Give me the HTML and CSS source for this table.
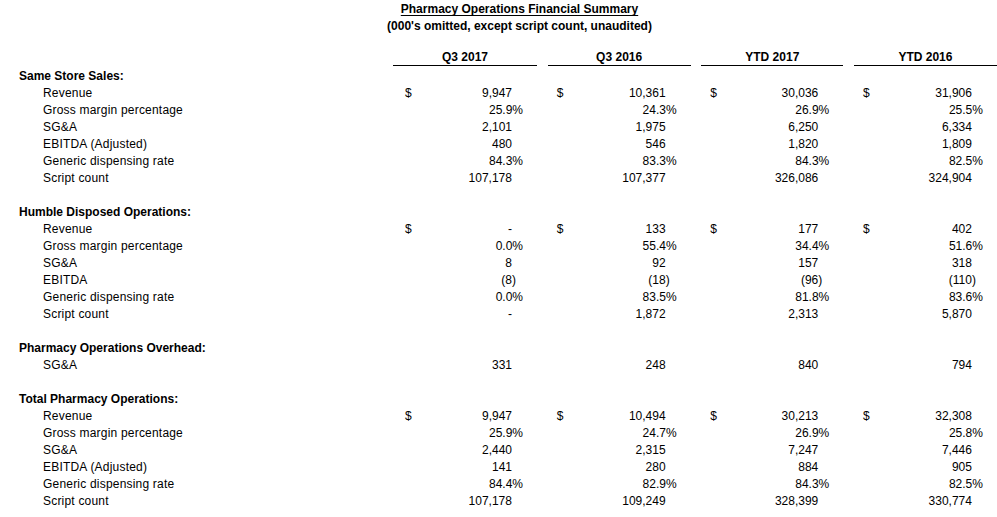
FILE: index.html
```html
<!DOCTYPE html>
<html>
<head>
<meta charset="utf-8">
<title>Pharmacy Operations Financial Summary</title>
<link rel="stylesheet" href="styles.css">
</head>
<body>
<div class="sheet">
  <div class="title"><span class="u">Pharmacy Operations Financial Summary</span></div>
  <div class="subtitle">(000's omitted, except script count, unaudited)</div>

  <div class="row head">
    <div class="label"></div>
    <div class="hd">Q3 2017</div>
    <div class="hd">Q3 2016</div>
    <div class="hd">YTD 2017</div>
    <div class="hd">YTD 2016</div>
  </div>

  <section class="block">
    <div class="row"><div class="label sec">Same Store Sales:</div></div>
    <div class="row">
      <div class="label sub">Revenue</div>
      <div class="c first"><span>$</span><span>9,947</span></div>
      <div class="c"><span>$</span><span>10,361</span></div>
      <div class="c"><span>$</span><span>30,036</span></div>
      <div class="c"><span>$</span><span>31,906</span></div>
    </div>
    <div class="row">
      <div class="label sub">Gross margin percentage</div>
      <div class="c pct"><span></span><span>25.9%</span></div>
      <div class="c pct"><span></span><span>24.3%</span></div>
      <div class="c pct"><span></span><span>26.9%</span></div>
      <div class="c pct"><span></span><span>25.5%</span></div>
    </div>
    <div class="row">
      <div class="label sub">SG&amp;A</div>
      <div class="c"><span></span><span>2,101</span></div>
      <div class="c"><span></span><span>1,975</span></div>
      <div class="c"><span></span><span>6,250</span></div>
      <div class="c"><span></span><span>6,334</span></div>
    </div>
    <div class="row">
      <div class="label sub">EBITDA (Adjusted)</div>
      <div class="c"><span></span><span>480</span></div>
      <div class="c"><span></span><span>546</span></div>
      <div class="c"><span></span><span>1,820</span></div>
      <div class="c"><span></span><span>1,809</span></div>
    </div>
    <div class="row">
      <div class="label sub">Generic dispensing rate</div>
      <div class="c pct"><span></span><span>84.3%</span></div>
      <div class="c pct"><span></span><span>83.3%</span></div>
      <div class="c pct"><span></span><span>84.3%</span></div>
      <div class="c pct"><span></span><span>82.5%</span></div>
    </div>
    <div class="row">
      <div class="label sub">Script count</div>
      <div class="c"><span></span><span>107,178</span></div>
      <div class="c"><span></span><span>107,377</span></div>
      <div class="c"><span></span><span>326,086</span></div>
      <div class="c"><span></span><span>324,904</span></div>
    </div>
  </section>

  <section class="block">
    <div class="row"><div class="label sec">Humble Disposed Operations:</div></div>
    <div class="row">
      <div class="label sub">Revenue</div>
      <div class="c first"><span>$</span><span>-</span></div>
      <div class="c"><span>$</span><span>133</span></div>
      <div class="c"><span>$</span><span>177</span></div>
      <div class="c"><span>$</span><span>402</span></div>
    </div>
    <div class="row">
      <div class="label sub">Gross margin percentage</div>
      <div class="c pct"><span></span><span>0.0%</span></div>
      <div class="c pct"><span></span><span>55.4%</span></div>
      <div class="c pct"><span></span><span>34.4%</span></div>
      <div class="c pct"><span></span><span>51.6%</span></div>
    </div>
    <div class="row">
      <div class="label sub">SG&amp;A</div>
      <div class="c"><span></span><span>8</span></div>
      <div class="c"><span></span><span>92</span></div>
      <div class="c"><span></span><span>157</span></div>
      <div class="c"><span></span><span>318</span></div>
    </div>
    <div class="row">
      <div class="label sub">EBITDA</div>
      <div class="c neg"><span></span><span>(8)</span></div>
      <div class="c neg"><span></span><span>(18)</span></div>
      <div class="c neg"><span></span><span>(96)</span></div>
      <div class="c neg"><span></span><span>(110)</span></div>
    </div>
    <div class="row">
      <div class="label sub">Generic dispensing rate</div>
      <div class="c pct"><span></span><span>0.0%</span></div>
      <div class="c pct"><span></span><span>83.5%</span></div>
      <div class="c pct"><span></span><span>81.8%</span></div>
      <div class="c pct"><span></span><span>83.6%</span></div>
    </div>
    <div class="row">
      <div class="label sub">Script count</div>
      <div class="c"><span></span><span>-</span></div>
      <div class="c"><span></span><span>1,872</span></div>
      <div class="c"><span></span><span>2,313</span></div>
      <div class="c"><span></span><span>5,870</span></div>
    </div>
  </section>

  <section class="block">
    <div class="row"><div class="label sec">Pharmacy Operations Overhead:</div></div>
    <div class="row">
      <div class="label sub">SG&amp;A</div>
      <div class="c"><span></span><span>331</span></div>
      <div class="c"><span></span><span>248</span></div>
      <div class="c"><span></span><span>840</span></div>
      <div class="c"><span></span><span>794</span></div>
    </div>
  </section>

  <section class="block">
    <div class="row"><div class="label sec">Total Pharmacy Operations:</div></div>
    <div class="row">
      <div class="label sub">Revenue</div>
      <div class="c first"><span>$</span><span>9,947</span></div>
      <div class="c"><span>$</span><span>10,494</span></div>
      <div class="c"><span>$</span><span>30,213</span></div>
      <div class="c"><span>$</span><span>32,308</span></div>
    </div>
    <div class="row">
      <div class="label sub">Gross margin percentage</div>
      <div class="c pct"><span></span><span>25.9%</span></div>
      <div class="c pct"><span></span><span>24.7%</span></div>
      <div class="c pct"><span></span><span>26.9%</span></div>
      <div class="c pct"><span></span><span>25.8%</span></div>
    </div>
    <div class="row">
      <div class="label sub">SG&amp;A</div>
      <div class="c"><span></span><span>2,440</span></div>
      <div class="c"><span></span><span>2,315</span></div>
      <div class="c"><span></span><span>7,247</span></div>
      <div class="c"><span></span><span>7,446</span></div>
    </div>
    <div class="row">
      <div class="label sub">EBITDA (Adjusted)</div>
      <div class="c"><span></span><span>141</span></div>
      <div class="c"><span></span><span>280</span></div>
      <div class="c"><span></span><span>884</span></div>
      <div class="c"><span></span><span>905</span></div>
    </div>
    <div class="row">
      <div class="label sub">Generic dispensing rate</div>
      <div class="c pct"><span></span><span>84.4%</span></div>
      <div class="c pct"><span></span><span>82.9%</span></div>
      <div class="c pct"><span></span><span>84.3%</span></div>
      <div class="c pct"><span></span><span>82.5%</span></div>
    </div>
    <div class="row">
      <div class="label sub">Script count</div>
      <div class="c"><span></span><span>107,178</span></div>
      <div class="c"><span></span><span>109,249</span></div>
      <div class="c"><span></span><span>328,399</span></div>
      <div class="c"><span></span><span>330,774</span></div>
    </div>
  </section>
</div>
</body>
</html>
```

FILE: styles.css
```css
html, body {
  margin: 0;
  padding: 0;
  background: #ffffff;
}

body {
  font-family: "Liberation Sans", Arial, sans-serif;
  font-size: 12px;
  line-height: 17px;
  color: #000000;
  width: 997px;
  overflow: hidden;
}

.sheet {
  padding-top: 1px;
}

.title,
.subtitle {
  font-weight: bold;
  text-align: center;
  padding-left: 42px;
  height: 17px;
}

.title .u {
  text-decoration: underline;
  text-underline-offset: 2px;
}

.row {
  display: grid;
  grid-template-columns: 382.33px 144px 143px 142px 143px;
  column-gap: 10.67px;
  height: 17px;
}

.row.head {
  margin-top: 14px;
  height: 17px;
  margin-bottom: 2px;
}

.hd {
  font-weight: bold;
  text-align: center;
  border-bottom: 1px solid #000000;
  height: 16px;
  line-height: 17px;
}

.block {
  margin-bottom: 17px;
}

.label {
  white-space: nowrap;
}

.label.sec {
  font-weight: bold;
  padding-left: 19px;
}

.label.sub {
  padding-left: 43px;
  letter-spacing: 0.2px;
}

.c {
  display: flex;
  justify-content: space-between;
  padding-left: 9px;
  padding-right: 25px;
  white-space: nowrap;
}

.c.first {
  padding-left: 12px;
}

.c.pct {
  padding-right: 14px;
}

.c.neg {
  padding-right: 21px;
}
```
